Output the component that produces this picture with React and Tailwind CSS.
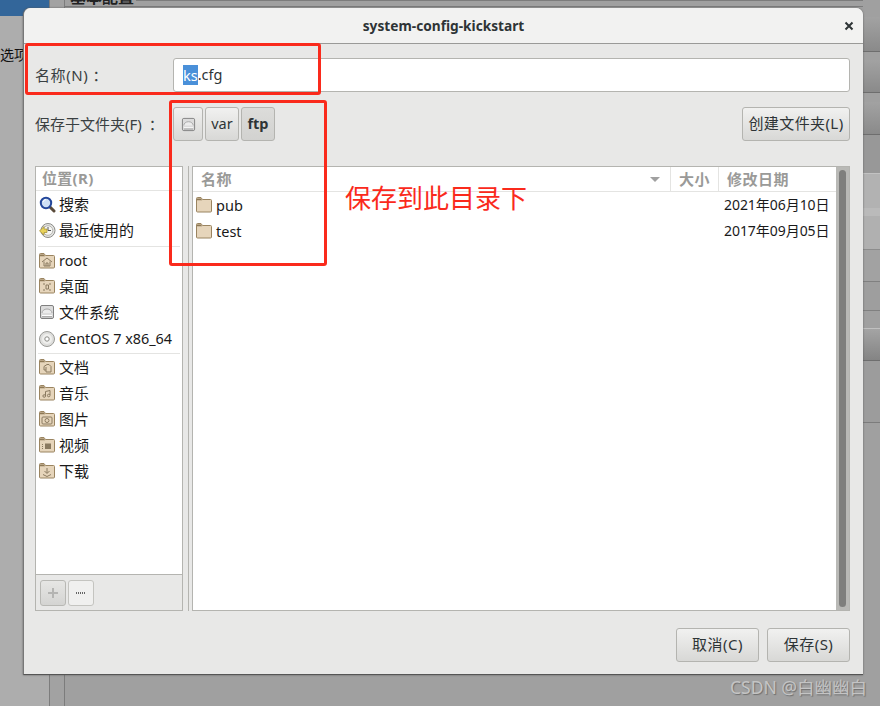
import React from 'react';

const FONT = "font-['Noto_Sans','Noto_Sans_CJK_SC',sans-serif]";

// tan folder with a small emblem drawn on top
const Folder = ({ children, size = 16 }) => (
  <svg width={size} height={size} viewBox="0 0 16 16" className="shrink-0">
    <path d="M0.5 3V1.5a1 1 0 0 1 1-1h3.5l1.5 2h8a1 1 0 0 1 1 1V14a1 1 0 0 1-1 1h-13a1 1 0 0 1-1-1z" fill="#e6d5bb" stroke="#9a8460" />
    <path d="M1 3.2V1.6h3.8l1.4 1.6z" fill="#8d7855" />
    {children}
  </svg>
);

const Emblem = ({ type }) => {
  const s = { fill: 'none', stroke: '#8a7a60', strokeWidth: 1 };
  if (type === 'home') return <path d="M3 9l5-4 5 4M5 8.5V13h6V8.5M7 13v-3h2v3" {...s} />;
  if (type === 'desk') return <path d="M4 6h2M10 6h2M4 12h2M10 12h2M7 7h2.5v4H7z" {...s} />;
  if (type === 'doc') return <path d="M5 7.5l3-2h2l2 2V13H7V8M5 7.5V11h2" {...s} />;
  if (type === 'music') return <path d="M6.5 11V6.5l4.500-1V10M6.500 11a1.300 1.300 0 1 1-2.600 0a1.300 1.300 0 0 1 2.600 0zM11 10.500a1.300 1.300 0 1 1-2.600 0a1.300 1.300 0 0 1 2.600 0z" {...s} />;
  if (type === 'photo') return <><rect x="3" y="6" width="10" height="7" rx="1" {...s} /><circle cx="8" cy="9.500" r="2" {...s} /></>;
  if (type === 'video') return <><rect x="6" y="6.500" width="6" height="5.500" fill="#8a7a60" /><path d="M3.500 7v5" stroke="#8a7a60" strokeDasharray="1 1" /></>;
  return <path d="M8 5v5M5.500 8L8 10.500 10.500 8M4 11.500l4 2 4-2" {...s} />;
};

const Drive = ({ size = 16 }) => (
  <svg width={size} height={size} viewBox="0 0 16 16" className="shrink-0">
    <rect x="1.500" y="1.500" width="13" height="13" rx="1.500" fill="#dcdcdc" stroke="#808080" />
    <path d="M3 11.500h10" stroke="#fff" />
    <path d="M3 9a5 4 0 0 1 10 0" fill="#ececec" stroke="#a8a8a8" />
    <path d="M3 12.800h10" stroke="#9a9a9a" />
  </svg>
);

const SearchIcon = () => (
  <svg width="17" height="17" viewBox="0 0 17 17" className="shrink-0">
    <path d="M10.500 10.500l4.500 4.500" stroke="#5a4a3a" strokeWidth="3" strokeLinecap="round" />
    <circle cx="7" cy="7" r="5.200" fill="#cfe0f5" stroke="#24479a" strokeWidth="2" />
    <path d="M4 6a3.200 3.200 0 0 1 3-2.500" stroke="#fff" fill="none" />
  </svg>
);

const RecentIcon = () => (
  <svg width="17" height="17" viewBox="0 0 17 17" className="shrink-0">
    <circle cx="9" cy="8.500" r="7" fill="#e4e4e2" stroke="#8a8a86" />
    <circle cx="9" cy="8.500" r="4.800" fill="#f6f6f4" stroke="#b5b5b0" />
    <path d="M9 5v3.500h3" stroke="#555" fill="none" />
    <path d="M0.500 9L5 4.500V7h3v3.500H5V13z" fill="#e8d25a" stroke="#a08c30" strokeWidth="0.700" />
  </svg>
);

const DiscIcon = () => (
  <svg width="16" height="16" viewBox="0 0 16 16" className="shrink-0">
    <circle cx="8" cy="8" r="7.500" fill="#dededc" stroke="#9a9a96" />
    <circle cx="8" cy="8" r="5" fill="#efefed" />
    <circle cx="8" cy="8" r="2.200" fill="#fff" stroke="#8a8a86" />
  </svg>
);

const placesTop = [
  { label: '搜索', icon: <SearchIcon />, h: 'h-[26px]' },
  { label: '最近使用的', icon: <RecentIcon />, h: 'h-[26px]' },
];
const placesMid = [
  { label: 'root', icon: <Folder><Emblem type="home" /></Folder>, h: 'h-[25px]', latin: true },
  { label: '桌面', icon: <Folder><Emblem type="desk" /></Folder>, h: 'h-[26px]' },
  { label: '文件系统', icon: <Drive />, h: 'h-[26px]' },
  { label: 'CentOS 7 x86_64', icon: <DiscIcon />, h: 'h-[27px]', latin: true },
];
const placesBottom = [
  { label: '文档', icon: <Folder><Emblem type="doc" /></Folder> },
  { label: '音乐', icon: <Folder><Emblem type="music" /></Folder> },
  { label: '图片', icon: <Folder><Emblem type="photo" /></Folder> },
  { label: '视频', icon: <Folder><Emblem type="video" /></Folder> },
  { label: '下载', icon: <Folder><Emblem type="down" /></Folder> },
];

const Place = ({ label, icon, h = 'h-[26px]', latin }) => (
  <div className={`${h} flex items-center pl-[1px] text-[#1a1a1a] ${latin ? 'text-[14.4px]' : 'text-[15px]'}`}>
    <span className="w-[20px] flex justify-center">{icon}</span>
    <span className="ml-[2px] whitespace-nowrap">{label}</span>
  </div>
);

const GtkButton = ({ className = '', children }) => (
  <div className={`h-[34px] flex items-center justify-center rounded-[3px] border border-[#b4b4b0] bg-gradient-to-b from-[#f1f1f0] to-[#d8d8d6] text-[14.5px] text-[#2e3436] whitespace-nowrap ${className}`}>
    {children}
  </div>
);

const HeaderCell = ({ className = '', children }) => (
  <div className={`h-[24px] flex items-center border-r border-[#e4e4e2] text-[15px] tracking-[0.5px] font-bold text-[#9a9a98] ${className}`}>
    {children}
  </div>
);

const files = [
  { name: 'pub', date: '2021年06月10日' },
  { name: 'test', date: '2017年09月05日' },
];

const Dialog = () => (
  <div className="absolute left-[23px] top-[8px] w-[840px] h-[667px] flex flex-col rounded-t-[7px] border-b border-[#555] border-l border-l-[#777] shadow-[0_0_2px_#555] bg-[#e8e8e7]">
    <div className="h-[36px] shrink-0 flex items-center justify-center relative rounded-t-[7px] bg-[#f2f2f1] border-b border-[#9a9a98] pt-[1px] text-[13.7px] font-bold text-[#2e3436]">
      system-config-kickstart
      <svg width="10" height="10" viewBox="0 0 10 10" className="absolute right-[9px] top-[13px]">
        <path d="M1.500 1.500l7 7M8.500 1.500l-7 7" stroke="#2e3436" strokeWidth="2" />
      </svg>
    </div>

    <div className="flex-1 flex flex-col pl-[11px] pr-[13px] pt-[14px]">
      <div className="h-[34px] flex items-center shrink-0">
        <span className="w-[138px] text-[15px] tracking-[0.6px] text-[#3a4042] whitespace-nowrap">名称(N)<span className="ml-[4px]">：</span></span>
        <div className="flex-1 h-[34px] flex items-center rounded-[3px] border border-[#b4b4b0] bg-white pl-[9px] text-[14.5px] text-[#2e3436]">
          <span className="bg-[#4a90d9] text-white leading-[20px]">ks</span>.cfg
        </div>
      </div>

      <div className="h-[34px] mt-[15px] flex items-center shrink-0">
        <span className="w-[138px] text-[15px] text-[#3a4042] whitespace-nowrap">保存于文件夹(F)<span className="ml-[7px]">：</span></span>
        <div className="flex gap-[2px]">
          <GtkButton className="w-[30px]"><Drive size={15} /></GtkButton>
          <GtkButton className="w-[34px]">var</GtkButton>
          <GtkButton className="w-[34px] font-bold !from-[#dcdcda] !to-[#d2d2d0]">ftp</GtkButton>
        </div>
        <GtkButton className="w-[108px] ml-auto text-[15px] tracking-[0.4px] pb-[2px]">创建文件夹(L)</GtkButton>
      </div>

      <div className="h-[445px] mt-[25px] flex shrink-0">
        <div className="w-[148px] flex flex-col border border-[#b4b4b0] bg-white">
          <div className="h-[24px] shrink-0 flex items-center pl-[6px] border-b border-[#e4e4e2] text-[15px] tracking-[0.3px] font-bold text-[#9a9a98]">位置(R)</div>
          <div className="flex-1">
            {placesTop.map((p) => <Place key={p.label} {...p} />)}
            <div className="mx-[2px] mt-[3px] mb-[1px] border-t border-[#e4e4e2]" />
            {placesMid.map((p) => <Place key={p.label} {...p} />)}
            <div className="mx-[2px] mt-[1px] border-t border-[#e4e4e2]" />
            {placesBottom.map((p) => <Place key={p.label} {...p} />)}
          </div>
          <div className="h-[36px] shrink-0 flex items-center gap-[2px] pl-[4px] border-t border-[#b4b4b0] bg-[#e8e8e7]">
            <div className="w-[26px] h-[26px] flex items-center justify-center rounded-[3px] border border-[#b8b8b4] bg-gradient-to-b from-[#e6e6e4] to-[#d4d4d2]">
              <svg width="10" height="10" viewBox="0 0 10 10"><path d="M5 0v10M0 5h10" stroke="#b4b4b2" strokeWidth="2" /></svg>
            </div>
            <div className="w-[26px] h-[26px] flex items-center justify-center rounded-[3px] border border-[#c4c4c0] bg-[#f0f0ef]">
              <svg width="10" height="2" viewBox="0 0 10 2"><path d="M0 1h10" stroke="#666" strokeWidth="2" strokeDasharray="1 1" /></svg>
            </div>
          </div>
        </div>

        <div className="w-[9px] shrink-0 flex justify-center"><div className="w-[1px] bg-[#b4b4b0] mr-[-1px]" /></div>

        <div className="flex-1 flex border border-[#b4b4b0] bg-white">
          <div className="flex-1 flex flex-col">
            <div className="flex border-b border-[#e4e4e2]">
              <HeaderCell className="flex-1 pl-[8px] justify-between pr-[10px]">
                名称
                <svg width="10" height="5" viewBox="0 0 10 5"><path d="M0 0h10L5 5z" fill="#a0a0a0" /></svg>
              </HeaderCell>
              <HeaderCell className="w-[48px] pl-[8px]">大小</HeaderCell>
              <HeaderCell className="w-[117px] pl-[8px] border-r-0">修改日期</HeaderCell>
            </div>
            {files.map((f) => (
              <div key={f.name} className="h-[26px] flex items-center pl-[3px] text-[14.500px] text-[#1a1a1a]">
                <Folder />
                <span className="ml-[4px] flex-1 mt-[1px]">{f.name}</span>
                <span className="w-[112px] text-[14px] tracking-[-0.050px] mt-[-2px]">{f.date}</span>
              </div>
            ))}
          </div>
          <div className="w-[13px] shrink-0 flex justify-center py-[3px] bg-[#b9b9b6]">
            <div className="w-[7px] rounded-full bg-[#7f7f7d]" />
          </div>
        </div>
      </div>

      <div className="flex justify-end gap-[8px] mt-[17px]">
        <GtkButton className="w-[83px] text-[15px] tracking-[0.5px] pb-[2px]">取消(C)</GtkButton>
        <GtkButton className="w-[83px] text-[15px] tracking-[0.5px] pb-[2px]">保存(S)</GtkButton>
      </div>
    </div>
  </div>
);

// rows of the dimmed window that stick out on the right of the dialog
const strips = [
  { h: 'h-[17px]', c: 'bg-[#a0a0a0]' },
  { h: 'h-[35px]', c: 'bg-gradient-to-b from-[#a2a2a2] to-[#8a8a8a] border-b border-[#6e6e6e]' },
  { h: 'h-[8px]', c: 'bg-[#a0a0a0]' },
  { h: 'h-[33px]', c: 'bg-gradient-to-b from-[#a2a2a2] to-[#8a8a8a] border-b border-[#6e6e6e]' },
  { h: 'h-[9px]', c: 'bg-[#a0a0a0]' },
  { h: 'h-[33px]', c: 'bg-gradient-to-b from-[#a2a2a2] to-[#8a8a8a] border-b border-[#6e6e6e]' },
  { h: 'h-[38px]', c: 'bg-[#989898]' },
  { h: 'h-[35px]', c: 'bg-[#b2b2b2] border-t border-[#c2c2c2]' },
  { h: 'h-[8px]', c: 'bg-[#bababa]' },
  { h: 'h-[34px]', c: 'bg-[#b0b0b0] border-b border-[#8c8c8c]' },
  { h: 'h-[32px]', c: 'bg-[#a2a2a2] border-b border-[#808080]' },
  { h: 'h-[29px]', c: 'bg-[#9e9e9e] border-b border-[#808080]' },
  { h: 'h-[18px]', c: 'bg-[#a0a0a0] border-b border-[#c0c0c0]' },
  { h: 'h-[32px]', c: 'bg-gradient-to-b from-[#a4a4a4] to-[#848484] border-b border-[#6e6e6e]' },
  { h: 'h-[62px]', c: 'bg-[#9c9c9c] border-b border-[#7c7c7c]' },
];

export default function App() {
  return (
    <div className={`relative w-[880px] h-[706px] overflow-hidden flex bg-[#a0a0a0] ${FONT}`}>
      {/* dimmed window behind the dialog */}
      <div className="w-[49px] shrink-0 bg-[#adadad]">
        <div className="h-[16px] bg-[#33669a]" />
        <div className="mt-[29px] text-[14px] leading-[20px] text-[#111] whitespace-nowrap">选项</div>
      </div>
      <div className="w-[16px] shrink-0 bg-[#a2a2a2] border-x border-[#7c7c7c]" />
      <div className="flex-1 min-w-0 flex flex-col">
        <div className="h-[7px] border-b border-[#7c7c7c] flex items-end pl-[5px] overflow-hidden">
          <span className="text-[16px] leading-[16px] mb-[1px] font-bold text-[#222] whitespace-nowrap">基本配置</span>
          <div className="flex-1 self-start ml-[2px] border-t border-[#7c7c7c]" />
        </div>
      </div>
      <div className="w-[17px] shrink-0 flex flex-col">
        {strips.map((s, i) => <div key={i} className={`${s.h} shrink-0 ${s.c}`} />)}
      </div>

      <Dialog />

      {/* red annotations */}
      <div className="absolute left-[25px] top-[43px] w-[296px] h-[52px] rounded-[3px] border-[3px] border-[#fa2a1c]" />
      <div className="absolute left-[169px] top-[100px] w-[158px] h-[166px] rounded-[3px] border-[3px] border-[#fa2a1c]" />
      <div className="absolute left-[345px] top-[182px] text-[26px] leading-[32px] text-[#fa2a1c] whitespace-nowrap">保存到此目录下</div>

      <div className="absolute left-[730px] top-[676px] text-[17.5px] leading-[22px] text-[#c4c4c4] [text-shadow:1px_1px_1px_#6f6f6f] whitespace-nowrap">CSDN @白幽幽白</div>
    </div>
  );
}
